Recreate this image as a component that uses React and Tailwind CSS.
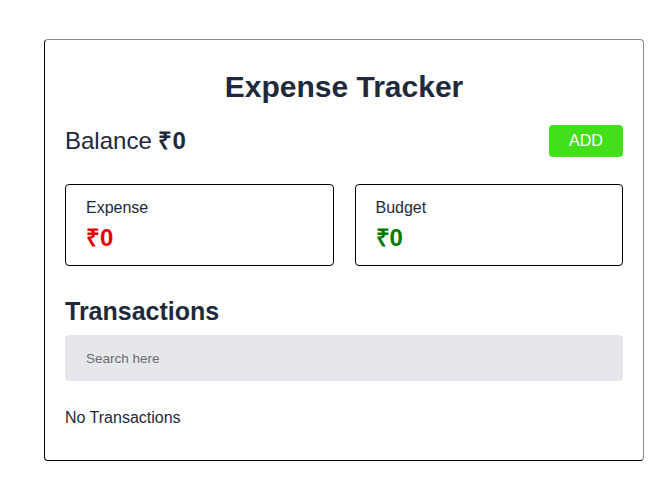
import React, { useState } from 'react';

const Stat = ({ label, value, color }) => (
    <div className="flex-1 border border-black rounded-[4px] px-5 pt-[11px] pb-[11px]">
        <div className="text-base leading-6 text-[#1e293b]">{label}</div>
        <div className={`mt-[2px] text-2xl leading-8 font-bold ${color}`}>₹{value}</div>
    </div>
);

const App = () => {
    const [query, setQuery] = useState('');

    return (
        <div className="min-h-screen bg-white pt-[39px] pl-[44px]" style={{ fontFamily: '"Liberation Sans", Arial, sans-serif' }}>
            <div className="w-[600px] border border-[#8a8a8a] border-l-black border-b-black rounded-[4px] px-5 pt-[29px] pb-[31px]">
                <h1 className="text-center text-[30px] leading-9 font-bold text-[#1e293b]">Expense Tracker</h1>

                <div className="flex items-center justify-between mt-5 h-8">
                    <div className="text-2xl leading-8 text-[#1e293b]">
                        Balance <span className="font-bold">₹0</span>
                    </div>
                    <button className="w-[74px] h-8 rounded-[4px] bg-[#44df1c] text-white text-base">ADD</button>
                </div>

                <div className="flex gap-[21px] mt-[27px]">
                    <Stat label="Expense" value={0} color="text-[#e60000]" />
                    <Stat label="Budget" value={0} color="text-[#007a00]" />
                </div>

                <h2 className="mt-[29px] text-[25px] leading-8 font-bold text-[#1e293b]">Transactions</h2>

                <input
                    value={query}
                    onChange={(e) => setQuery(e.target.value)}
                    placeholder="Search here"
                    className="mt-2 w-full h-[46px] rounded-[4px] bg-[#e5e7eb] px-[21px] text-[13.5px] text-[#1e293b] placeholder:text-[#6b6b6b] outline-none"
                />

                <div className="mt-[26px] text-base leading-[22px] text-[#1e293b]">No Transactions</div>
            </div>
        </div>
    );
};

export default App;
